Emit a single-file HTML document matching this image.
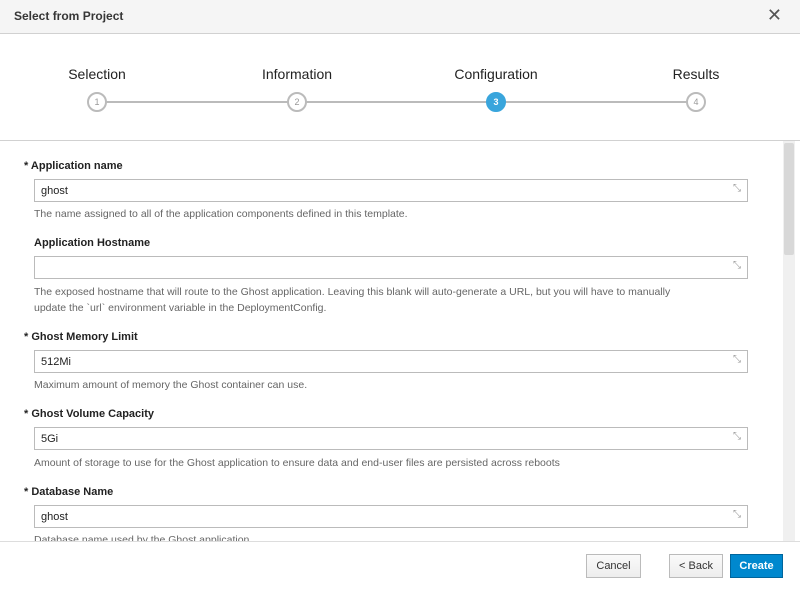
<!DOCTYPE html>
<html><head><style>
*{box-sizing:border-box;margin:0;padding:0}
body{width:800px;height:592px;overflow:hidden;background:#fff;font-family:"Liberation Sans",sans-serif;color:#363636;position:relative}
.hdr{position:absolute;left:0;top:0;width:800px;height:34px;background:#f5f5f5;border-bottom:1px solid #d1d1d1}
.hdr .t{position:absolute;left:14px;top:9px;font-size:12px;font-weight:bold}
.hdr .x{position:absolute;right:18px;top:5px;font-size:18px;color:#555}
.steps{position:absolute;top:34px;left:0;width:800px;height:107px;border-bottom:1px solid #d1d1d1}
.lbl{position:absolute;top:32px;font-size:14px;color:#222;transform:translateX(-50%)}
.line{position:absolute;top:67px;left:97px;width:599px;height:2px;background:#bbb}
.c{position:absolute;top:58px;width:20px;height:20px;border-radius:50%;border:2px solid #bbb;background:#fff;font-size:9px;color:#999;text-align:center;line-height:16px;transform:translateX(-50%)}
.c.a{background:#39a5dc;border-color:#39a5dc;color:#fff;font-weight:bold}
.content{position:absolute;top:141px;left:0;width:800px;height:400px;overflow:hidden}
.sb{position:absolute;right:5px;top:0;width:12px;height:400px;background:#f0f0f0}
.sb div{position:absolute;left:1px;top:2px;width:10px;height:112px;background:#d8d8d8;border-radius:2px}
.f{position:absolute;left:24px;font-size:11px}
.f b{display:block;font-size:11px;color:#222;height:14px}
.in{position:absolute;left:34px;width:714px;height:23px;border:1px solid #bbb;font-size:11px;padding:5px 6px;color:#222}
.in:after{content:"⤡";position:absolute;right:6px;top:3px;font-size:10px;color:#999}
.h{position:absolute;left:34px;font-size:10.5px;color:#666;line-height:16px}
.ft{position:absolute;top:541px;left:0;width:800px;height:51px;border-top:1px solid #ddd;background:#fff}
.btn{position:absolute;top:12px;height:24px;border:1px solid #bbb;background:linear-gradient(#fafafa,#ededed);font-size:11px;text-align:center;line-height:22px;color:#333}
.btn.p{background:#0088ce;border-color:#00659c;color:#fff;font-weight:bold}
</style></head><body>
<div class="hdr"><div class="t">Select from Project</div><div class="x">✕</div></div>
<div class="steps">
<div class="lbl" style="left:97px">Selection</div>
<div class="lbl" style="left:297px">Information</div>
<div class="lbl" style="left:496px">Configuration</div>
<div class="lbl" style="left:696px">Results</div>
<div class="line"></div>
<div class="c" style="left:97px">1</div>
<div class="c" style="left:297px">2</div>
<div class="c a" style="left:496px">3</div>
<div class="c" style="left:696px">4</div>
</div>
<div class="content">
<div class="f" style="top:19px"><b>* Application name</b></div>
<div class="in" style="top:38px">ghost</div>
<div class="h" style="top:65px">The name assigned to all of the application components defined in this template.</div>
<div class="f" style="top:96px;left:34px"><b>Application Hostname</b></div>
<div class="in" style="top:115px"></div>
<div class="h" style="top:143px">The exposed hostname that will route to the Ghost application. Leaving this blank will auto-generate a URL, but you will have to manually<br>update the `url` environment variable in the DeploymentConfig.</div>
<div class="f" style="top:190px"><b>* Ghost Memory Limit</b></div>
<div class="in" style="top:209px">512Mi</div>
<div class="h" style="top:236px">Maximum amount of memory the Ghost container can use.</div>
<div class="f" style="top:267px"><b>* Ghost Volume Capacity</b></div>
<div class="in" style="top:286px">5Gi</div>
<div class="h" style="top:314px">Amount of storage to use for the Ghost application to ensure data and end-user files are persisted across reboots</div>
<div class="f" style="top:345px"><b>* Database Name</b></div>
<div class="in" style="top:364px">ghost</div>
<div class="h" style="top:391px">Database name used by the Ghost application</div>
<div class="sb"><div></div></div>
</div>
<div class="ft">
<div class="btn" style="left:586px;width:55px">Cancel</div>
<div class="btn" style="left:669px;width:54px">&lt; Back</div>
<div class="btn p" style="left:730px;width:53px">Create</div>
</div>
</body></html>
